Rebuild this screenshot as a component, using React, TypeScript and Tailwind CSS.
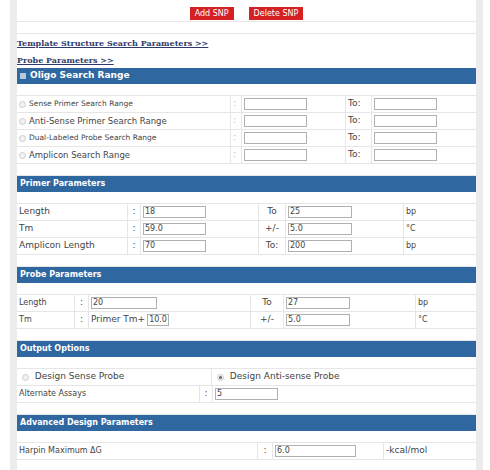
import React from 'react';

const Header = ({ title, icon }: { title: string; icon?: boolean }) => (
  <div className="h-[16px] bg-[#2f67a0] flex items-center px-[3px] gap-[4px] text-white font-bold text-[8px]">
    {icon && <span className="w-[6px] h-[6px] bg-[#b8c8dc] inline-block" />}
    <span className={icon ? 'text-[9px]' : ''}>{title}</span>
  </div>
);

const Cell = ({ w, children, className = '' }: { w?: string; children?: React.ReactNode; className?: string }) => (
  <div className={`${w ?? 'flex-1'} h-full bg-white flex items-center px-[2px] ${className}`}>{children}</div>
);

const Input = ({ w, value = '' }: { w: string; value?: string }) => (
  <div className={`${w} h-[12px] border border-[#b0b0b0] bg-white text-[8px] leading-[10px] px-[1px] text-[#444]`}>{value}</div>
);

const Row = ({ children }: { children: React.ReactNode }) => (
  <div className="h-[17px] flex gap-[1px] bg-[#e6e6e6] border-b border-[#e6e6e6]">{children}</div>
);

const Radio = ({ on }: { on?: boolean }) => (
  <span className="w-[7px] h-[7px] rounded-full border border-[#ccc] bg-[#f2f2f2] inline-flex items-center justify-center mr-[3px]">
    {on && <span className="w-[3px] h-[3px] rounded-full bg-[#666]" />}
  </span>
);

const Spacer = () => <div className="h-[12px] bg-white border-b border-[#e6e6e6]" />;

export default function App() {
  const oligo = ['Sense Primer Search Range', 'Anti-Sense Primer Search Range', 'Dual-Labeled Probe Search Range', 'Amplicon Search Range'];
  return (
    <div className="w-[490px] h-[470px] bg-white overflow-hidden text-[#444] text-[9px]" style={{ fontFamily: '"DejaVu Sans", Verdana, sans-serif' }}>
      <div className="ml-[10px] w-[473px] h-full bg-[#ececec] px-[7px]">
        <div className="bg-white h-full">
          <div className="h-[22px] flex items-end justify-center gap-[15px] pb-[1px] border-b border-[#e6e6e6]">
            <span className="bg-[#d42222] text-white text-[8px] px-[5px] h-[13px] flex items-center">Add SNP</span>
            <span className="bg-[#d42222] text-white text-[8px] px-[5px] h-[13px] flex items-center">Delete SNP</span>
          </div>
          <div className="h-[12px] border-b border-[#e6e6e6]" />
          <div className="h-[17px] flex items-end pb-[2px]"><span className="font-bold underline text-[#2d3a6a] text-[8px]" style={{ fontFamily: '"DejaVu Serif", serif' }}>Template Structure Search Parameters &gt;&gt;</span></div>
          <div className="h-[17px] flex items-end pb-[2px]"><span className="font-bold underline text-[#2d3a6a] text-[8px]" style={{ fontFamily: '"DejaVu Serif", serif' }}>Probe Parameters &gt;&gt;</span></div>
          <Header title="Oligo Search Range" icon />
          <Spacer />
          {oligo.map((l, i) => (
            <Row key={l}>
              <Cell w="w-[213px]" className={i % 2 ? 'text-[8.5px]' : 'text-[7.5px]'}><Radio />{l}</Cell>
              <Cell w="w-[10px]" className="text-[#bbb]">:</Cell>
              <Cell w="w-[103px]"><Input w="w-[63px]" /></Cell>
              <Cell w="w-[25px]">To:</Cell>
              <Cell><Input w="w-[63px]" /></Cell>
            </Row>
          ))}
          <Spacer />
          <Header title="Primer Parameters" />
          <Spacer />
          {[['Length', '18', 'To', '25', 'bp'], ['Tm', '59.0', '+/-', '5.0', '°C'], ['Amplicon Length', '70', 'To:', '200', 'bp']].map(r => (
            <Row key={r[0]}>
              <Cell w="w-[110px]">{r[0]}</Cell>
              <Cell w="w-[12px]" className="justify-center">:</Cell>
              <Cell w="w-[117px]"><Input w="w-[63px]" value={r[1]} /></Cell>
              <Cell w="w-[26px]" className="justify-center">{r[2]}</Cell>
              <Cell w="w-[117px]"><Input w="w-[64px]" value={r[3]} /></Cell>
              <Cell className="text-[8px]">{r[4]}</Cell>
            </Row>
          ))}
          <Spacer />
          <Header title="Probe Parameters" />
          <Spacer />
          {[['Length', '20', 'To', '27', 'bp'], ['Tm', '', '+/-', '5.0', '°C']].map((r, i) => (
            <Row key={r[0]}>
              <Cell w="w-[57px]" className="text-[8px]">{r[0]}</Cell>
              <Cell w="w-[13px]" className="justify-center">:</Cell>
              <Cell w="w-[161px]">{i ? <><span className="mr-[2px]">Primer Tm+</span><Input w="w-[22px]" value="10.0" /></> : <Input w="w-[66px]" value={r[1]} />}</Cell>
              <Cell w="w-[32px]" className="justify-center">{r[2]}</Cell>
              <Cell w="w-[131px]"><Input w="w-[64px]" value={r[3]} /></Cell>
              <Cell className="text-[8px]">{r[4]}</Cell>
            </Row>
          ))}
          <Spacer />
          <Header title="Output Options" />
          <Spacer />
          <Row>
            <Cell w="w-[194px]" className="pl-[5px]"><Radio />&nbsp;Design Sense Probe</Cell>
            <Cell className="pl-[5px]"><Radio on />&nbsp;Design Anti-sense Probe</Cell>
          </Row>
          <Row>
            <Cell w="w-[182px]" className="text-[8px]">Alternate Assays</Cell>
            <Cell w="w-[12px]" className="justify-center">:</Cell>
            <Cell><Input w="w-[63px]" value="5" /></Cell>
          </Row>
          <Spacer />
          <Header title="Advanced Design Parameters" />
          <Spacer />
          <Row>
            <Cell w="w-[240px]" className="text-[8px]">Harpin Maximum ΔG</Cell>
            <Cell w="w-[14px]" className="justify-center">:</Cell>
            <Cell w="w-[110px]"><Input w="w-[81px]" value="6.0" /></Cell>
            <Cell>-kcal/mol</Cell>
          </Row>
        </div>
      </div>
    </div>
  );
}
